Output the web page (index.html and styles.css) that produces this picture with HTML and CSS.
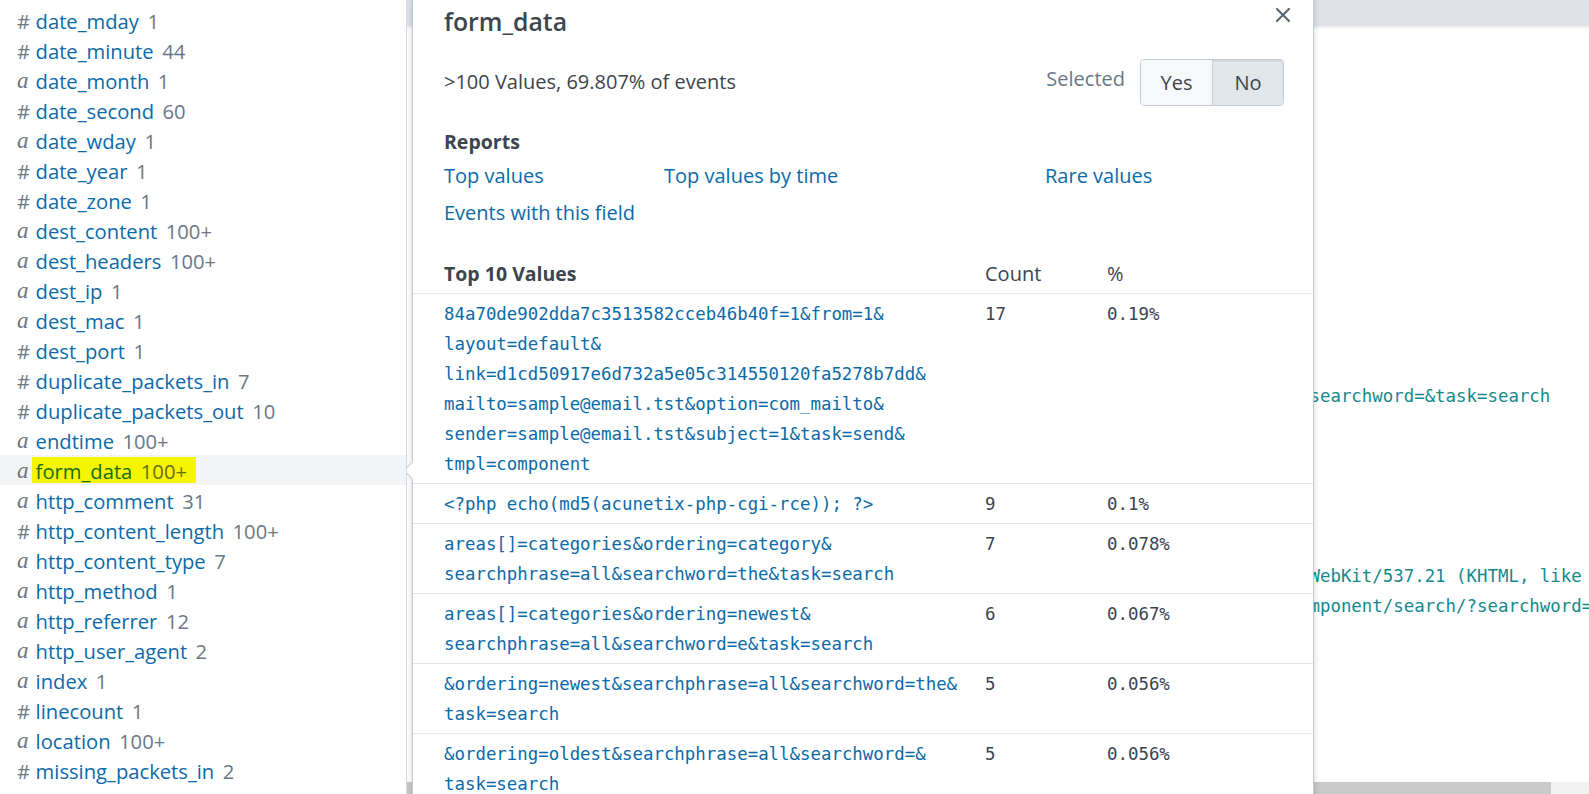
FILE: index.html
```html
<!DOCTYPE html>
<html lang="en">
<head>
<meta charset="utf-8">
<title>form_data field summary</title>
<link rel="stylesheet" href="styles.css">
</head>
<body>
<div class="app">
  <aside class="sidebar">
    <ul class="fields">
      <li class="field"><span class="type num">#</span><span class="fname">date_mday</span><span class="fcount">1</span></li>
      <li class="field"><span class="type num">#</span><span class="fname">date_minute</span><span class="fcount">44</span></li>
      <li class="field"><span class="type str">a</span><span class="fname">date_month</span><span class="fcount">1</span></li>
      <li class="field"><span class="type num">#</span><span class="fname">date_second</span><span class="fcount">60</span></li>
      <li class="field"><span class="type str">a</span><span class="fname">date_wday</span><span class="fcount">1</span></li>
      <li class="field"><span class="type num">#</span><span class="fname">date_year</span><span class="fcount">1</span></li>
      <li class="field"><span class="type num">#</span><span class="fname">date_zone</span><span class="fcount">1</span></li>
      <li class="field"><span class="type str">a</span><span class="fname">dest_content</span><span class="fcount">100+</span></li>
      <li class="field"><span class="type str">a</span><span class="fname">dest_headers</span><span class="fcount">100+</span></li>
      <li class="field"><span class="type str">a</span><span class="fname">dest_ip</span><span class="fcount">1</span></li>
      <li class="field"><span class="type str">a</span><span class="fname">dest_mac</span><span class="fcount">1</span></li>
      <li class="field"><span class="type num">#</span><span class="fname">dest_port</span><span class="fcount">1</span></li>
      <li class="field"><span class="type num">#</span><span class="fname">duplicate_packets_in</span><span class="fcount">7</span></li>
      <li class="field"><span class="type num">#</span><span class="fname">duplicate_packets_out</span><span class="fcount">10</span></li>
      <li class="field"><span class="type str">a</span><span class="fname">endtime</span><span class="fcount">100+</span></li>
      <li class="field active"><span class="type str">a</span><span class="hl"><span class="fname">form_data</span><span class="fcount">100+</span></span></li>
      <li class="field"><span class="type str">a</span><span class="fname">http_comment</span><span class="fcount">31</span></li>
      <li class="field"><span class="type num">#</span><span class="fname">http_content_length</span><span class="fcount">100+</span></li>
      <li class="field"><span class="type str">a</span><span class="fname">http_content_type</span><span class="fcount">7</span></li>
      <li class="field"><span class="type str">a</span><span class="fname">http_method</span><span class="fcount">1</span></li>
      <li class="field"><span class="type str">a</span><span class="fname">http_referrer</span><span class="fcount">12</span></li>
      <li class="field"><span class="type str">a</span><span class="fname">http_user_agent</span><span class="fcount">2</span></li>
      <li class="field"><span class="type str">a</span><span class="fname">index</span><span class="fcount">1</span></li>
      <li class="field"><span class="type num">#</span><span class="fname">linecount</span><span class="fcount">1</span></li>
      <li class="field"><span class="type str">a</span><span class="fname">location</span><span class="fcount">100+</span></li>
      <li class="field"><span class="type num">#</span><span class="fname">missing_packets_in</span><span class="fcount">2</span></li>
    </ul>
  </aside>

  <main class="main">
    <div class="topbar"></div>
    <div class="events">
      <div class="event ev-a">GET /joomla/index.php?option=com_search&amp;ordering=newest&amp;searchphrase=all&amp;limit=2000&amp;searchword=&amp;task=search</div>
      <div class="event ev-b">host=web1 src=10.11.36.20 http_user_agent="Mozilla/5.0 (Windows NT 6.1; WOW64) AppleWebKit/537.21 (KHTML, like Gecko) Chrome/41.0.2228.0 Safari/537.21"
status=200 bytes=5321 http_referrer="http://www.example-site.com/joomla/index.php/component/search/?searchword=the&amp;searchphrase=all"</div>
    </div>
    <div class="hscroll"><div class="thumb"></div></div>

    <section class="popover">
      <span class="arrow"></span>
      <header class="pop-head">
        <h2 class="pop-title">form_data</h2>
        <button class="close" aria-label="Close">
          <svg viewBox="0 0 16 16" width="16" height="16"><path d="M2 2 L14 14 M14 2 L2 14" stroke="#5c6773" stroke-width="2.2" stroke-linecap="round" fill="none"/></svg>
        </button>
      </header>

      <div class="summary">
        <span class="summary-text">&gt;100 Values, 69.807% of events</span>
        <div class="selected">
          <span class="selected-label">Selected</span>
          <div class="seg">
            <button class="seg-btn yes">Yes</button>
            <button class="seg-btn no">No</button>
          </div>
        </div>
      </div>

      <h3 class="reports-title">Reports</h3>
      <div class="links">
        <a class="link">Top values</a>
        <a class="link">Top values by time</a>
        <a class="link">Rare values</a>
        <a class="link">Events with this field</a>
      </div>

      <div class="values">
        <div class="tr th">
          <div class="c-val">Top 10 Values</div>
          <div class="c-count">Count</div>
          <div class="c-pct">%</div>
        </div>
        <div class="tr">
          <div class="c-val mono">84a70de902dda7c3513582cceb46b40f=1&amp;<wbr>from=1&amp;<wbr>layout=default&amp;<wbr>link=d1cd50917e6d732a5e05c314550120fa5278b7dd&amp;<wbr>mailto=sample@email.tst&amp;<wbr>option=com_mailto&amp;<wbr>sender=sample@email.tst&amp;<wbr>subject=1&amp;<wbr>task=send&amp;<wbr>tmpl=component</div>
          <div class="c-count mono">17</div>
          <div class="c-pct mono">0.19%</div>
        </div>
        <div class="tr">
          <div class="c-val mono">&lt;?php echo(md5(acunetix-php-cgi-rce)); ?&gt;</div>
          <div class="c-count mono">9</div>
          <div class="c-pct mono">0.1%</div>
        </div>
        <div class="tr">
          <div class="c-val mono">areas[]=categories&amp;<wbr>ordering=category&amp;<wbr>searchphrase=all&amp;<wbr>searchword=the&amp;<wbr>task=search</div>
          <div class="c-count mono">7</div>
          <div class="c-pct mono">0.078%</div>
        </div>
        <div class="tr">
          <div class="c-val mono">areas[]=categories&amp;<wbr>ordering=newest&amp;<wbr>searchphrase=all&amp;<wbr>searchword=e&amp;<wbr>task=search</div>
          <div class="c-count mono">6</div>
          <div class="c-pct mono">0.067%</div>
        </div>
        <div class="tr">
          <div class="c-val mono">&amp;<wbr>ordering=newest&amp;<wbr>searchphrase=all&amp;<wbr>searchword=the&amp;<wbr>task=search</div>
          <div class="c-count mono">5</div>
          <div class="c-pct mono">0.056%</div>
        </div>
        <div class="tr">
          <div class="c-val mono">&amp;<wbr>ordering=oldest&amp;<wbr>searchphrase=all&amp;<wbr>searchword=&amp;<wbr>task=search</div>
          <div class="c-count mono">5</div>
          <div class="c-pct mono">0.056%</div>
        </div>
      </div>
    </section>
  </main>
</div>
</body>
</html>
```

FILE: styles.css
```css
* { box-sizing: border-box; }

html, body {
  margin: 0;
  padding: 0;
  width: 1589px;
  height: 794px;
  overflow: hidden;
  background: #ffffff;
  font-family: "Open Sans", "Liberation Sans", sans-serif;
  color: #3c444d;
}

.app {
  display: flex;
  width: 1589px;
  height: 794px;
}

/* ---------- sidebar ---------- */
.sidebar {
  width: 407px;
  flex: none;
  height: 794px;
  overflow: hidden;
  border-right: 1px solid #d3d8de;
  background: #ffffff;
}

.fields {
  list-style: none;
  margin: 0;
  padding: 5px 0 0 0;
}

.field {
  display: flex;
  align-items: center;
  height: 30px;
  padding-left: 17px;
  font-size: 20.2px;
  line-height: 30px;
  white-space: nowrap;
}

.field.active { background: #f2f4f5; }

.type,
.fname,
.fcount {
  position: relative;
  top: 1px;
}

.hl .fname,
.hl .fcount { top: 0.5px; }

.type {
  width: 18.6px;
  flex: none;
  color: #6b7785;
}

.type.str {
  font-family: "Liberation Serif", "DejaVu Serif", serif;
  font-style: italic;
  font-size: 23px;
}

.fname { color: #0b6aa8; }

.fcount {
  margin-left: 8.5px;
  color: #6b7785;
}

.hl {
  display: inline-flex;
  align-items: center;
  height: 26px;
  margin-left: -3.6px;
  padding: 0 9px 0 3.6px;
  background: #f5f500;
}

.hl .fname { color: #136d17; }
.hl .fcount { color: #667012; }

/* ---------- main ---------- */
.main {
  position: relative;
  flex: 1;
  height: 794px;
  display: flex;
  flex-direction: column;
  overflow: hidden;
}

.topbar {
  height: 26px;
  flex: none;
  background: #dfe3e8;
  box-shadow: 0 1px 3px rgba(0, 0, 0, 0.12);
}

.events {
  flex: 1;
  padding-left: 23px;
}

.event {
  font-family: "DejaVu Sans Mono", "Liberation Mono", monospace;
  font-size: 17.4px;
  line-height: 30px;
  color: #13898b;
  white-space: pre;
}

.ev-a { margin-top: 355px; }
.ev-b { margin-top: 150px; }

.hscroll {
  height: 12px;
  flex: none;
  background: #f1f1f1;
}

.hscroll .thumb {
  width: 1144px;
  height: 12px;
  background: #c9c9c9;
}

/* ---------- popover ---------- */
.popover {
  position: absolute;
  left: 5px;
  top: -1px;
  width: 902px;
  bottom: -20px;
  background: #ffffff;
  border: 1px solid #c3cbd4;
  box-shadow: 0 0 6px rgba(0, 0, 0, 0.18);
  padding: 5px 29px 0 31px;
}

.arrow {
  position: absolute;
  left: -7px;
  top: 463.5px;
  width: 13px;
  height: 13px;
  background: #ffffff;
  border-left: 1px solid #c3cbd4;
  border-bottom: 1px solid #c3cbd4;
  transform: rotate(45deg);
}

.pop-head {
  display: flex;
  justify-content: space-between;
  align-items: flex-start;
}

.pop-title {
  margin: 0;
  font-size: 24.8px;
  font-weight: 600;
  line-height: 32px;
  color: #3c444d;
}

.close {
  width: 16px;
  height: 16px;
  margin: 2px -7px 0 0;
  padding: 0;
  border: 0;
  background: transparent;
  display: flex;
}

.summary {
  display: flex;
  justify-content: space-between;
  align-items: center;
  margin-top: 22px;
  font-size: 20px;
}

.summary-text { padding-bottom: 3px; }

.selected {
  display: flex;
  align-items: center;
}

.selected-label {
  color: #6b7785;
  padding-bottom: 8px;
  margin-right: 15px;
}

.seg {
  display: flex;
  height: 47px;
  border: 1px solid #c3cbd4;
  border-radius: 4px;
  overflow: hidden;
}

.seg-btn {
  border: 0;
  margin: 0;
  padding: 0;
  font-family: "Open Sans", "Liberation Sans", sans-serif;
  font-size: 20px;
  color: #3c444d;
}

.seg-btn.yes {
  width: 72px;
  background: #f7f8fa;
  border-right: 1px solid #c3cbd4;
}

.seg-btn.no {
  width: 70px;
  background: #e1e6eb;
  box-shadow: inset 0 2px 0 #d3d9df;
}

.reports-title {
  margin: 21px 0 0 0;
  font-size: 19.5px;
  font-weight: 700;
  line-height: 30px;
  color: #3c444d;
}

.links {
  display: grid;
  grid-template-columns: 220px 381px auto;
  row-gap: 7px;
  margin-top: 4px;
  font-size: 20px;
  line-height: 30px;
}

.link { color: #0b6aa8; }

.values {
  margin: 31px -29px 0 -31px;
  font-size: 20px;
}

.tr {
  display: grid;
  grid-template-columns: 572px 122px 1fr;
  padding: 5px 0 4px 0;
  border-bottom: 1px solid #e1e6eb;
  line-height: 30px;
}

.tr.th { padding-top: 0; }

.c-val {
  padding-left: 31px;
  padding-right: 16px;
}

.th .c-val { font-weight: 700; font-size: 19.5px; }

.mono {
  font-family: "DejaVu Sans Mono", "Liberation Mono", monospace;
  font-size: 17.4px;
}

.c-val.mono { color: #0b6aa8; }
.c-count.mono, .c-pct.mono { color: #3c444d; }
```
